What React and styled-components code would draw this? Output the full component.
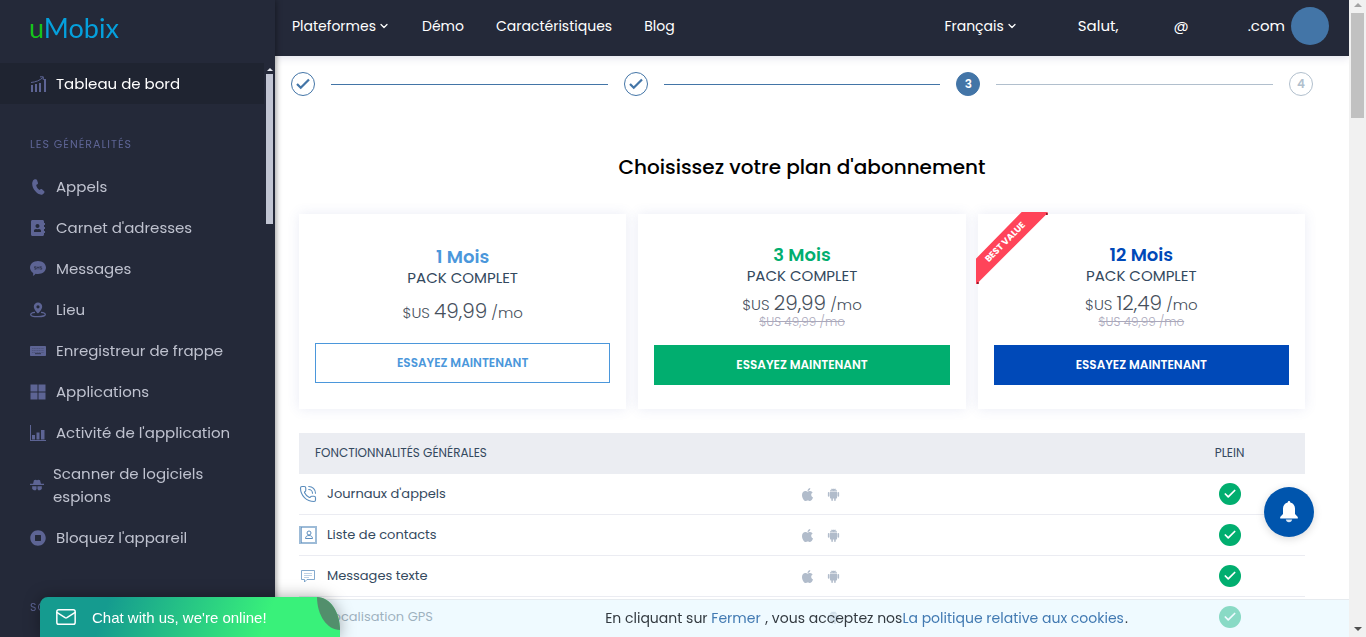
import React from "react";
import styled, { createGlobalStyle } from "styled-components";
import { Check, ChevronDown, Mail, PhoneCall } from "lucide-react";
import { FaAddressBook, FaApple, FaStopCircle } from "react-icons/fa";
import { AiFillAndroid } from "react-icons/ai";

const c = {
  dark: "#242939",
  darker: "#1f2431",
  muted: "#5d6494",
  blue: "#4375a7",
  sky: "#4b97db",
  green: "#01ae6f",
  royal: "#0049b8",
  text: "#34495e",
};

const GlobalStyle = createGlobalStyle`
  * { box-sizing: border-box; }
  body {
    margin: 0;
    overflow: hidden;
    background: #fff;
    color: ${c.text};
    font-family: Poppins, Inter, "Open Sans", sans-serif;
  }
  a { color: inherit; text-decoration: none; }
  button { font-family: inherit; cursor: pointer; }
  ul { list-style: none; margin: 0; padding: 0; }
  svg { display: block; flex: none; }
`;

const Shell = styled.div`
  display: grid;
  grid-template-columns: 275px minmax(0, 1fr) 17px;
  height: 100vh;
  overflow: hidden;
`;

/* ---------- Sidebar ---------- */

const Sidebar = styled.aside`
  display: flex;
  flex-direction: column;
  min-height: 0;
  z-index: 1;
  background: ${c.dark};
  box-shadow: 1px 0 6px rgba(0, 0, 0, 0.4);
`;

const Logo = styled.a`
  padding: 10px 29px 17px;
  font-family: Lato, sans-serif;
  font-size: 27px;
  line-height: 36px;
  color: #05a0dc;
  span { color: #16c41c; }
`;

const SideScroll = styled.div`
  display: flex;
  flex: 1;
  min-height: 0;
`;

const SideNav = styled.nav`
  flex: 1;
  overflow: hidden;
`;

const SideTrack = styled.div`
  display: flex;
  flex-direction: column;
  align-items: center;
  width: 11px;
  padding-top: 5px;
`;

const SideThumb = styled.div`
  width: 7px;
  height: 150px;
  margin-top: 3px;
  background: #c1c5d3;
`;

const SideList = styled.ul`
  padding-bottom: ${(p) => p.$bottom || 0}px;
`;

const SideLink = styled.a`
  display: flex;
  align-items: center;
  gap: ${(p) => (p.$tight ? 9 : 10)}px;
  padding: 9px 30px;
  font-size: 15px;
  line-height: 23px;
  color: ${(p) => (p.$active ? "#fff" : "#bfc2cf")};
  background: ${(p) => (p.$active ? c.darker : "transparent")};
  svg { color: ${c.muted}; }
`;

const SideHeading = styled.h2`
  margin: 0;
  padding: 30px 30px 12px;
  font-size: 11px;
  font-weight: 400;
  line-height: 20px;
  letter-spacing: 1px;
  color: ${c.muted};
`;

/* ---------- Top bar ---------- */

const Main = styled.div`
  display: flex;
  flex-direction: column;
  min-width: 0;
  min-height: 0;
  overflow: hidden;
`;

const TopBar = styled.header`
  display: flex;
  flex: none;
  align-items: center;
  justify-content: space-between;
  height: 56px;
  padding: 0 20px 4px 17px;
  font-size: 14px;
  line-height: 20px;
  color: #fff;
  background: ${c.dark};
  box-shadow: 0 2px 8px rgba(60, 70, 130, 0.15);
`;

const TopNav = styled.nav`
  display: flex;
  align-items: center;
  gap: ${(p) => p.$gap}px;
`;

const NavItem = styled.a`
  display: flex;
  align-items: center;
  gap: 2px;
`;

const User = styled.div`
  display: flex;
  align-items: center;
  font-size: 15px;
`;

const At = styled.span`
  margin: 0 59px 0 55px;
`;

const Avatar = styled.span`
  width: 38px;
  height: 38px;
  margin-left: 6px;
  border-radius: 50%;
  background: ${c.blue};
`;

/* ---------- Steps ---------- */

const Steps = styled.ol`
  display: flex;
  align-items: center;
  gap: 16px;
  margin: 0;
  padding: 16px 36px 0 16px;
  list-style: none;
`;

const Step = styled.li`
  display: flex;
  align-items: center;
  justify-content: center;
  width: 24px;
  height: 24px;
  border: 1px solid ${(p) => (p.$todo ? "#b1bfcd" : c.blue)};
  border-radius: 50%;
  font-size: 12px;
  font-weight: 600;
  color: ${(p) => (p.$current ? "#fff" : p.$todo ? "#b1bfcd" : c.blue)};
  background: ${(p) => (p.$current ? c.blue : "transparent")};
`;

const StepLine = styled.li`
  flex: 1;
  height: 1px;
  background: ${(p) => (p.$todo ? "#b1bfcd" : c.blue)};
`;

/* ---------- Plans ---------- */

const Content = styled.main`
  padding: 0 44px 0 24px;
`;

const Title = styled.h1`
  margin: 56px 0 32px;
  font-size: 20px;
  font-weight: 500;
  line-height: 30px;
  text-align: center;
  color: #000;
`;

const Plans = styled.div`
  display: grid;
  grid-template-columns: repeat(3, 1fr);
  gap: 12px;
`;

const Plan = styled.section`
  position: relative;
  display: flex;
  flex-direction: column;
  justify-content: center;
  padding: 30px 16px 24px;
  text-align: center;
  background: #fff;
  box-shadow: 0 0 12px rgba(70, 90, 170, 0.12);
`;

const PlanName = styled.h2`
  margin: 0;
  font-size: 18px;
  font-weight: 600;
  line-height: 22px;
  color: ${(p) => p.$color};
`;

const PlanPack = styled.p`
  margin: 0;
  font-size: 15px;
  line-height: 20px;
`;

const Price = styled.p`
  height: 24px;
  margin: ${(p) => (p.$alone ? "11px 0 20px" : "5px 0 0")};
  font-size: 15px;
  font-weight: 300;
  line-height: 24px;
  color: #46505c;
  span { font-size: 20px; }
`;

const OldPrice = styled.s`
  margin-bottom: 16px;
  font-size: 12px;
  font-weight: 300;
  line-height: 14px;
  color: #aaa8bb;
`;

const TryButton = styled.button`
  height: 40px;
  border: 1px solid ${(p) => p.$color};
  font-size: 12px;
  font-weight: 600;
  color: ${(p) => (p.$outline ? p.$color : "#fff")};
  background: ${(p) => (p.$outline ? "#fff" : p.$color)};
`;

const Ribbon = styled.div`
  position: absolute;
  top: -2px;
  left: -2px;
  width: 72px;
  height: 72px;
  overflow: hidden;
  clip-path: polygon(46px 0, 72px 0, 72px 3px, 70px 3px, 3px 70px, 3px 72px, 0 72px, 0 47px);
  background: #ff4459;
  &::before,
  &::after {
    content: "";
    position: absolute;
    width: 2px;
    height: 2px;
    background: #8c1f2d;
  }
  &::before { top: 1px; right: 0; }
  &::after { bottom: 0; left: 1px; }
  span {
    position: absolute;
    top: 20px;
    left: -20px;
    width: 98px;
    font-size: 9px;
    font-weight: 700;
    line-height: 20px;
    color: #fff;
    transform: rotate(-45deg);
  }
`;

/* ---------- Features table ---------- */

const Table = styled.table`
  width: 100%;
  margin-top: 24px;
  border-collapse: separate;
  border-spacing: 0;
  table-layout: fixed;
`;

const HeadCell = styled.th`
  width: ${(p) => p.$w};
  height: 41px;
  padding: 0 0 2px ${(p) => (p.$first ? 16 : 0)}px;
  font-size: 12px;
  font-weight: 400;
  text-align: ${(p) => (p.$first ? "left" : "center")};
  background: #ebedf2;
`;

const Cell = styled.td`
  height: 41px;
  padding: 0;
  border-bottom: 1px solid #ebecf2;
  font-size: 13px;
`;

const Feature = styled.div`
  display: flex;
  align-items: center;
  gap: 10px;
  svg { color: #5b8dbd; }
`;

const Systems = styled.div`
  display: flex;
  align-items: center;
  gap: 15px;
  color: #b1bccb;
`;

const Slot = styled.span`
  display: flex;
  justify-content: center;
  width: 11px;
`;

const Tick = styled.span`
  display: flex;
  align-items: center;
  justify-content: center;
  width: 22px;
  height: 22px;
  margin: 0 auto;
  border-radius: 50%;
  color: #fff;
  background: ${c.green};
`;

/* ---------- Floating parts ---------- */

const CookieBar = styled.div`
  position: fixed;
  right: 17px;
  bottom: 0;
  left: 275px;
  height: 38px;
  padding-left: 109px;
  border-top: 1px solid #e6ebef;
  font-size: 14px;
  line-height: 36px;
  text-align: center;
  white-space: pre;
  color: #333a40;
  background: rgba(229, 247, 255, 0.6);
  a {
    padding-right: 1px;
    color: #427ab2;
  }
`;

const Chat = styled.button`
  position: fixed;
  z-index: 2;
  bottom: 0;
  left: 40px;
  display: flex;
  align-items: center;
  gap: 15px;
  width: 300px;
  height: 40px;
  padding: 0 15px;
  border: 0;
  border-radius: 8px 23px 0 0 / 8px 33px 0 0;
  font-family: "Liberation Sans", sans-serif;
  font-size: 15px;
  color: #fff;
  background: linear-gradient(110deg, #159b8f 22%, #39f17a 75%);
  box-shadow: 0 0 16px rgba(0, 0, 0, 0.35);
`;

const Curl = styled.span`
  position: absolute;
  top: 0;
  right: 0;
`;

const Bell = styled.button`
  position: fixed;
  right: 52px;
  bottom: 100px;
  display: flex;
  align-items: center;
  justify-content: center;
  width: 50px;
  height: 50px;
  padding: 0;
  border: 0;
  border-radius: 50%;
  color: #fff;
  background: #0055ad;
  box-shadow: 0 2px 8px rgba(0, 0, 0, 0.15);
`;

const Track = styled.div`
  display: flex;
  flex-direction: column;
  align-items: center;
  padding: 3px 0 6px;
  background: #f1f1f1;
`;

const Thumb = styled.div`
  width: 13px;
  height: 105px;
  margin: 6px 0 auto;
  background: #c1c1c1;
`;

const Arrow = styled.span`
  border: ${(p) => p.$size || 4}px solid transparent;
  border-${(p) => (p.$down ? "top" : "bottom")}-color: ${(p) => p.$color};
  border-${(p) => (p.$down ? "bottom" : "top")}-width: 0;
`;

/* ---------- Icons ---------- */

const Svg = ({ size = 16, children, ...rest }) => (
  <svg width={size} height={size} viewBox="0 0 16 16" fill="currentColor" aria-hidden="true" {...rest}>
    {children}
  </svg>
);

const PhoneIcon = () => (
  <Svg>
    <path d="M3 1.500C4 .2 6.500-.2 7 1l1 3c.2.8-.7 1.300-1.800 2C6.500 8 7.800 10 9.500 11c1-.8 1.800-1.300 2.500-.7l2.200 2c.8.8-.3 2.300-1.800 3.200C8 17 1.200 9.500 2.300 3.500z" />
  </Svg>
);
const GrowthIcon = () => (
  <Svg>
    <path d="M1 9h2v7H1zM5 8h2v8H5zM9 7h2v9H9zM14 3h2v13h-2z" />
    <path d="M1 6.500C6 6 9.500 4.500 13 1.500M10 .8h3.300V4" fill="none" stroke="currentColor" />
  </Svg>
);
const SmsIcon = () => (
  <Svg>
    <path d="M8 0c4.400 0 8 2.800 8 6.500S12.400 13 8 13c-.8 0-1.600-.1-2.400-.3C5 13.500 4 14.500 2.800 14.800c.4-.8.6-1.800.4-2.800C1.200 10.700 0 8.700 0 6.500 0 2.800 3.600 0 8 0z" />
    <path d="M6 5.700H4.500v1.200H6v1.300H4.400M7 8.400V5.700l1 1.300 1-1.300v2.700M11.700 5.700h-1.500v1.200h1.500v1.300h-1.600" fill="none" stroke={c.dark} strokeWidth=".6" />
  </Svg>
);
const PlaceIcon = () => (
  <Svg>
    <path fillRule="evenodd" d="M8 .5a4.200 4.200 0 0 1 4.200 4.200C12.200 7.500 8 11.500 8 11.500S3.800 7.500 3.800 4.700A4.200 4.200 0 0 1 8 .5zm0 2.700a1.600 1.600 0 1 0 0 3.200 1.600 1.600 0 0 0 0-3.200z" />
    <path d="M5 10.300C2.500 10.500.7 11.300.7 12.400c0 1.300 3.300 2.200 7.300 2.200s7.300-.9 7.300-2.200c0-1.100-1.800-1.900-4.300-2.100" fill="none" stroke="currentColor" strokeWidth="1.300" />
  </Svg>
);
const KeyboardIcon = () => (
  <Svg>
    <rect y="3" width="16" height="10" rx=".8" />
    <path d="M2 5.500h12M2 7.500h12M2 9.500h12" stroke={c.dark} strokeOpacity=".25" strokeDasharray="1.200 .5" />
    <path d="M5 10.700h6" stroke={c.dark} strokeWidth=".8" />
  </Svg>
);
const AppsIcon = () => (
  <Svg>
    <path d="M.5.500h7v7h-7zM8.500.500h7v7h-7zM.5 8.500h7v7h-7zM8.500 8.500h7v7h-7z" />
  </Svg>
);
const ActivityIcon = () => (
  <Svg>
    <path d="M0 0h1v15h15v1H0zM2 10h3v4.500H2zM6.500 7.500h3v7h-3zM11 5h3.500v9.500H11z" />
  </Svg>
);
const SpyIcon = () => (
  <Svg size={14}>
    <path d="M4.500 2.500 6.500 2l1.500.6L9.500 2l2 .5 1 4H16v1.400H0V6.500h3.500zM2.500 9.500h5v3.200l-1 1.300h-2l-2-1.500zM8.500 9.500h5v3L11.500 14h-2l-1-1.300z" />
  </Svg>
);
const ContactIcon = () => (
  <svg width="18" height="18" viewBox="0 0 18 18" fill="none" stroke="currentColor" aria-hidden="true">
    <rect x="1" y="1" width="16" height="16" strokeWidth="2" strokeOpacity=".6" />
    <path d="M2.500 1v16" strokeOpacity=".7" />
    <circle cx="10" cy="7" r="2" />
    <path d="M6.500 12.500c0-2 1.500-3 3.500-3s3.500 1 3.500 3z" />
  </svg>
);
const TextIcon = () => (
  <svg width="18" height="18" viewBox="0 0 18 18" fill="none" stroke="currentColor" strokeOpacity=".75" aria-hidden="true">
    <path d="M2.500 3.500h13v9H8l-2.500 2.500v-2.500h-3z" />
    <path d="M5 6.500h8M5 8.500h8M5 10.500h5" strokeOpacity=".4" />
  </svg>
);
const BellIcon = () => (
  <svg width="20" height="22" viewBox="0 0 20 22" fill="currentColor" aria-hidden="true">
    <path d="M10 0c.8 0 1.300.6 1.300 1.500 3 .7 4.700 3 4.700 6V13l2.800 3v1.500H1.200V16L4 13V7.500c0-3 1.700-5.300 4.700-6C8.700.6 9.200 0 10 0z" />
    <path d="M6.800 18.600h6.400c-.3 1.600-1.500 2.600-3.200 2.600s-2.900-1-3.200-2.600z" opacity=".85" />
  </svg>
);

/* ---------- Data ---------- */

const sideItems = [
  ["Appels", <PhoneIcon />],
  ["Carnet d'adresses", <FaAddressBook size={16} />],
  ["Messages", <SmsIcon />],
  ["Lieu", <PlaceIcon />],
  ["Enregistreur de frappe", <KeyboardIcon />],
  ["Applications", <AppsIcon />],
  ["Activité de l'application", <ActivityIcon />],
  ["Scanner de logiciels espions", <SpyIcon />, true],
  ["Bloquez l'appareil", <FaStopCircle size={16} />],
];

const plans = [
  { name: "1 Mois", price: "49,99", color: c.sky, outline: true },
  { name: "3 Mois", price: "29,99", old: "$US 49,99 /mo", color: c.green },
  { name: "12 Mois", price: "12,49", old: "$US 49,99 /mo", color: c.royal, best: true },
];

const features = [
  ["Journaux d'appels", <PhoneCall size={18} strokeWidth={1.5} />, true],
  ["Liste de contacts", <ContactIcon />, true],
  ["Messages texte", <TextIcon />, true],
  ["Localisation GPS", <Svg size={18} />, false],
];

const StepCheck = () => <Check size={18} strokeWidth={3} strokeLinecap="butt" strokeLinejoin="miter" />;

export default function App() {
  return (
    <>
      <GlobalStyle />
      <Shell>
        <Sidebar>
          <Logo href="#"><span>u</span>Mobix</Logo>
          <SideScroll>
            <SideNav>
              <SideLink href="#" $active><GrowthIcon />Tableau de bord</SideLink>
              <SideHeading>LES GÉNÉRALITÉS</SideHeading>
              <SideList $bottom={9}>
                {sideItems.map(([label, icon, tight]) => (
                  <li key={label}>
                    <SideLink href="#" $tight={tight}>{icon}{label}</SideLink>
                  </li>
                ))}
              </SideList>
              <SideHeading>SOCIAL</SideHeading>
            </SideNav>
            <SideTrack aria-hidden="true">
              <Arrow $size={3} $color="#e4e6ee" />
              <SideThumb />
            </SideTrack>
          </SideScroll>
        </Sidebar>

        <Main>
          <TopBar>
            <TopNav $gap={32}>
              <NavItem href="#">Plateformes<ChevronDown size={12} strokeWidth={2.5} /></NavItem>
              <NavItem href="#">Démo</NavItem>
              <NavItem href="#">Caractéristiques</NavItem>
              <NavItem href="#">Blog</NavItem>
            </TopNav>
            <TopNav $gap={60}>
              <NavItem href="#">Français<ChevronDown size={12} strokeWidth={2.5} /></NavItem>
              <User>Salut,<At>@</At>.com<Avatar /></User>
            </TopNav>
          </TopBar>

          <Steps>
            <Step><StepCheck /></Step>
            <StepLine />
            <Step><StepCheck /></Step>
            <StepLine />
            <Step $current>3</Step>
            <StepLine $todo />
            <Step $todo>4</Step>
          </Steps>

          <Content>
            <Title>Choisissez votre plan d'abonnement</Title>
            <Plans>
              {plans.map((p) => (
                <Plan key={p.name}>
                  {p.best && <Ribbon><span>BEST VALUE</span></Ribbon>}
                  <PlanName $color={p.color}>{p.name}</PlanName>
                  <PlanPack>PACK COMPLET</PlanPack>
                  <Price $alone={!p.old}>$US <span>{p.price}</span> /mo</Price>
                  {p.old && <OldPrice>{p.old}</OldPrice>}
                  <TryButton $color={p.color} $outline={p.outline}>ESSAYEZ MAINTENANT</TryButton>
                </Plan>
              ))}
            </Plans>

            <Table>
              <thead>
                <tr>
                  <HeadCell $w="50%" $first>FONCTIONNALITÉS GÉNÉRALES</HeadCell>
                  <HeadCell $w="35%" />
                  <HeadCell $w="15%">PLEIN</HeadCell>
                </tr>
              </thead>
              <tbody>
                {features.map(([label, icon, apple]) => (
                  <tr key={label}>
                    <Cell><Feature>{icon}{label}</Feature></Cell>
                    <Cell>
                      <Systems>
                        <Slot>{apple && <FaApple size={15} />}</Slot>
                        <Slot><AiFillAndroid size={15} /></Slot>
                      </Systems>
                    </Cell>
                    <Cell><Tick><Check size={14} strokeWidth={3} /></Tick></Cell>
                  </tr>
                ))}
              </tbody>
            </Table>
          </Content>
        </Main>

        <Track aria-hidden="true">
          <Arrow $color="#a3a3a3" />
          <Thumb />
          <Arrow $down $color="#505050" />
        </Track>
      </Shell>

      <CookieBar>
        En cliquant sur <a href="#">Fermer</a> , vous acceptez nos<a href="#">La politique relative aux cookies</a>.
      </CookieBar>
      <Bell aria-label="Notifications"><BellIcon /></Bell>
      <Chat>
        <Mail size={22} strokeWidth={1.6} />
        Chat with us, we're online!
        <Curl>
          <svg width="23" height="33" viewBox="0 0 23 33" aria-hidden="true">
            <path d="M0 0C13 0 23 15 23 33 10 33 0 18 0 0z" fill="#528f6c" />
          </svg>
        </Curl>
      </Chat>
    </>
  );
}
